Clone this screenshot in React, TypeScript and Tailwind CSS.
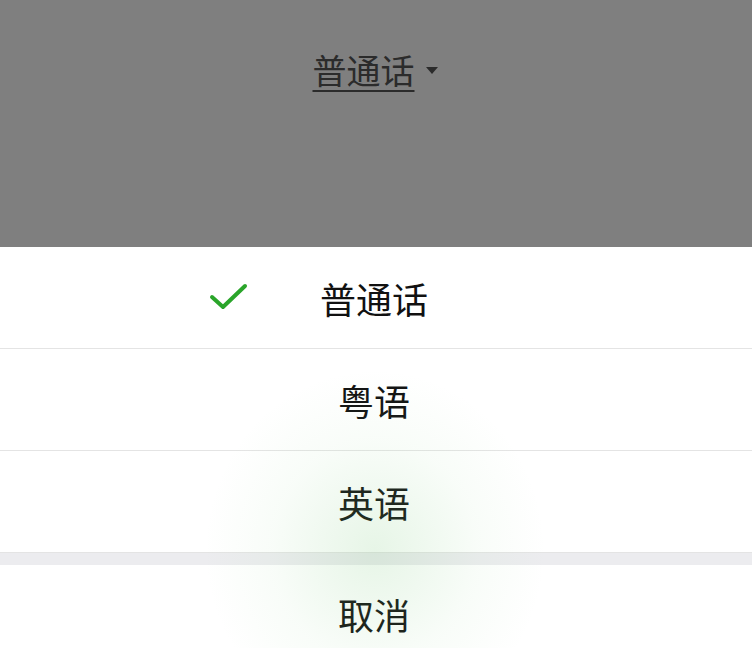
import React from 'react';

const font = { fontFamily: '"Noto Sans CJK SC", "Noto Sans", sans-serif' };

const options = ['普通话', '粤语', '英语'];

export default function App() {
	const selected = '普通话';
	return (
		<div className="relative w-[752px] h-[648px] overflow-hidden bg-white flex flex-col" style={font}>
			{/* dimmed page behind the sheet */}
			<div className="shrink-0 h-[247px] bg-[#7f7f7f] flex justify-center pt-[47px]">
				<div className="flex items-center h-[46px] gap-[11px] -ml-[2px]">
					<span className="text-[34px] leading-none text-[#2b2b2b] underline underline-offset-[6px] decoration-[1.5px]">普通话</span>
					<svg width="12" height="8" viewBox="0 0 12 8" className="mt-[2px]">
						<path d="M0 0 L12 0 L6 7 Z" fill="#2b2b2b" />
					</svg>
				</div>
			</div>

			{/* action sheet */}
			<div className="shrink-0 flex flex-col bg-white">
				{options.map((o) => (
					<div key={o} className="relative h-[102px] border-b border-[#e4e4e4] flex items-center justify-center">
						{o === selected && (
							<svg width="40" height="28" viewBox="0 0 40 28" className="absolute left-[209px] top-[36px]">
								<path d="M3 14 L14 24 L36 3" fill="none" stroke="#2aa52a" strokeWidth="4" strokeLinecap="round" strokeLinejoin="round" />
							</svg>
						)}
						<span className="text-[36px] leading-none text-[#111] -ml-[4px]">{o}</span>
					</div>
				))}
				<div className="h-[12px] bg-[#ececef]" />
				<div className="h-[84px] flex items-center justify-center pt-[14px]">
					<span className="text-[36px] leading-none text-[#111] -ml-[4px]">取消</span>
				</div>
			</div>

			{/* touch ripple glow */}
			<div className="pointer-events-none absolute left-[205px] top-[370px] w-[340px] h-[360px] rounded-full bg-[radial-gradient(closest-side,rgba(120,200,120,0.18),rgba(160,220,160,0.07)_60%,rgba(255,255,255,0))]" />
		</div>
	);
}
